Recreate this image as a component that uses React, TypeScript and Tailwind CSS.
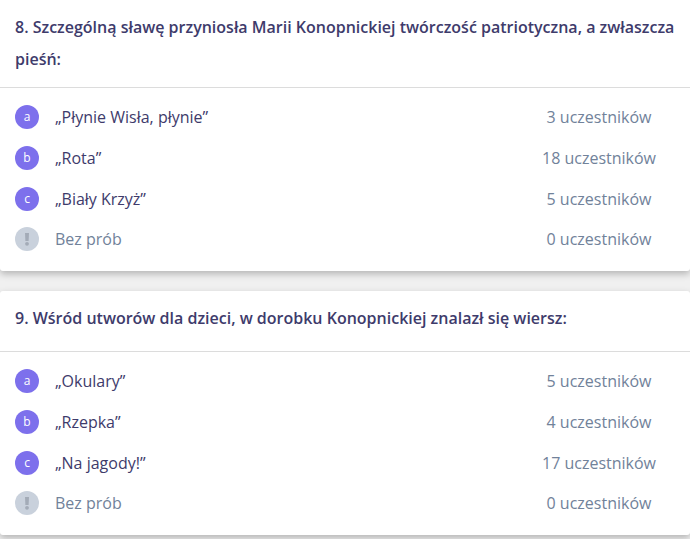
import clsx from "clsx";

type Answer = {
  mark: string;
  text: string;
  count: string;
};

type Question = {
  title: string;
  answers: Answer[];
  skipped: string;
};

const questions: Question[] = [
  {
    title:
      "8. Szczególną sławę przyniosła Marii Konopnickiej twórczość patriotyczna, a zwłaszcza pieśń:",
    answers: [
      { mark: "a", text: "„Płynie Wisła, płynie”", count: "3 uczestników" },
      { mark: "b", text: "„Rota”", count: "18 uczestników" },
      { mark: "c", text: "„Biały Krzyż”", count: "5 uczestników" },
    ],
    skipped: "0 uczestników",
  },
  {
    title: "9. Wśród utworów dla dzieci, w dorobku Konopnickiej znalazł się wiersz:",
    answers: [
      { mark: "a", text: "„Okulary”", count: "5 uczestników" },
      { mark: "b", text: "„Rzepka”", count: "4 uczestników" },
      { mark: "c", text: "„Na jagody!”", count: "17 uczestników" },
    ],
    skipped: "0 uczestników",
  },
];

function SkippedIcon() {
  return (
    <svg viewBox="0 0 24 24" className="size-6 shrink-0" aria-hidden="true">
      <circle cx="12" cy="12" r="12" fill="#c9d1dc" />
      <path d="M10 6h4l-.4 8h-3.2z" fill="#a3abb7" />
      <circle cx="12" cy="16.8" r="1.9" fill="#a3abb7" />
    </svg>
  );
}

function Row({ mark, text, count }: Partial<Answer>) {
  return (
    <li className={clsx("flex items-center px-[15px]", mark ? "h-[41px]" : "h-10")}>
      {mark ? (
        <span className="flex size-6 shrink-0 items-center justify-center rounded-full bg-[#7d70ec] pt-px text-xs font-medium text-white">
          {mark}
        </span>
      ) : (
        <SkippedIcon />
      )}
      <span className={clsx("ml-4 flex-1", mark ? "text-[#3e3b6b]" : "text-[#71829a]")}>{text}</span>
      <span className="w-38 text-center text-[#71829a]">{count}</span>
    </li>
  );
}

function QuestionCard({ title, answers, skipped }: Question) {
  return (
    <section className="rounded-[3px] bg-white shadow-[0_3px_7px_rgba(0,0,0,0.25)] first:rounded-t-none">
      <h2 className="min-h-[61px] border-b border-[#dcdcdc] px-[15px] pt-[11px] pb-3 leading-8 font-semibold text-[#3e3b6b]">
        {title}
      </h2>
      <ul className="pt-2 pb-3">
        {answers.map((answer) => (
          <Row key={answer.mark} {...answer} />
        ))}
        <Row text="Bez prób" count={skipped} />
      </ul>
    </section>
  );
}

export default function App() {
  return (
    <main className="flex min-h-screen flex-col gap-5 bg-[#f0f0f0] font-['Open_Sans',sans-serif] text-base">
      {questions.map((question) => (
        <QuestionCard key={question.title} {...question} />
      ))}
    </main>
  );
}
